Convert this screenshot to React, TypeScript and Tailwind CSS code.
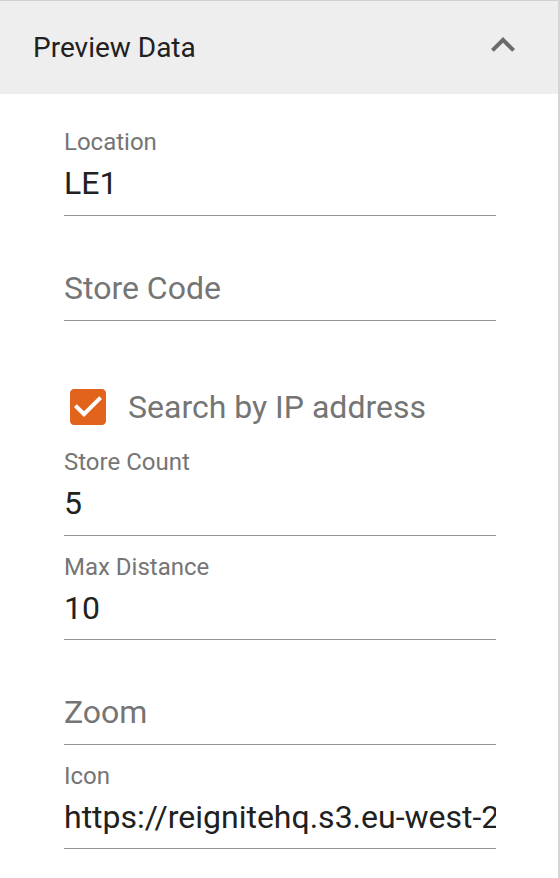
const FONT = { fontFamily: 'Roboto, "Liberation Sans", sans-serif' }

type FieldProps = { label?: string; value?: string; placeholder?: string; short?: boolean }

function Field({ label, value, placeholder, short }: FieldProps) {
  return (
    <div className={(short ? 'h-[104px]' : 'h-[105px]') + ' w-[432px] border-b border-[#949494]'}>
      <div className="h-[54px] pt-[17px]">
        {label && <div className="text-[24px] leading-[28px] text-[#757575]">{label}</div>}
      </div>
      <div className="text-[32px] leading-[36px] whitespace-nowrap overflow-x-hidden">
        {value ? <span className="text-[#212121]">{value}</span> : <span className="text-[#757575]">{placeholder}</span>}
      </div>
    </div>
  )
}

function ExpandLess() {
  return (
    <svg width="48" height="48" viewBox="0 0 24 24" fill="#6b6b6b">
      <path d="M12 8l-6 6 1.41 1.41L12 10.83l4.59 4.58L18 14z" />
    </svg>
  )
}

function CheckedBox() {
  return (
    <svg width="48" height="48" viewBox="0 0 24 24" className="shrink-0">
      <path
        fill="#e2631c"
        d="M19 3H5c-1.11 0-2 .9-2 2v14c0 1.1.89 2 2 2h14c1.11 0 2-.9 2-2V5c0-1.1-.89-2-2-2zm-9 14l-5-5 1.41-1.41L10 14.17l7.59-7.59L19 8l-9 9z"
      />
    </svg>
  )
}

export default function App() {
  return (
    <div className="min-h-[878px] bg-white border-r border-[#d6d6d6]" style={FONT}>
      {/* Header */}
      <header className="h-[94px] bg-[#eeeeee] border-t border-[#d0d0d0] flex justify-between pl-[33px] pr-[31px]">
        <span className="mt-[31px] text-[28px] leading-[32px] text-[#212121]">Preview Data</span>
        <div className="mt-[20px]">
          <ExpandLess />
        </div>
      </header>

      <main className="pl-[64px] pt-[17px]">
        <Field label="Location" value="LE1" />
        <Field placeholder="Store Code" />

        {/* Checkbox row */}
        <div className="h-[110px] pt-[62px] flex items-start">
          <CheckedBox />
          <span className="ml-[16px] mt-[6px] text-[32px] leading-[36px] text-[#757575]">Search by IP address</span>
        </div>

        <Field label="Store Count" value="5" />
        <Field label="Max Distance" value="10" short />
        <Field placeholder="Zoom" />
        <Field label="Icon" value="https://reignitehq.s3.eu-west-2.amazonaws.com/icon.png" short />
      </main>
    </div>
  )
}
